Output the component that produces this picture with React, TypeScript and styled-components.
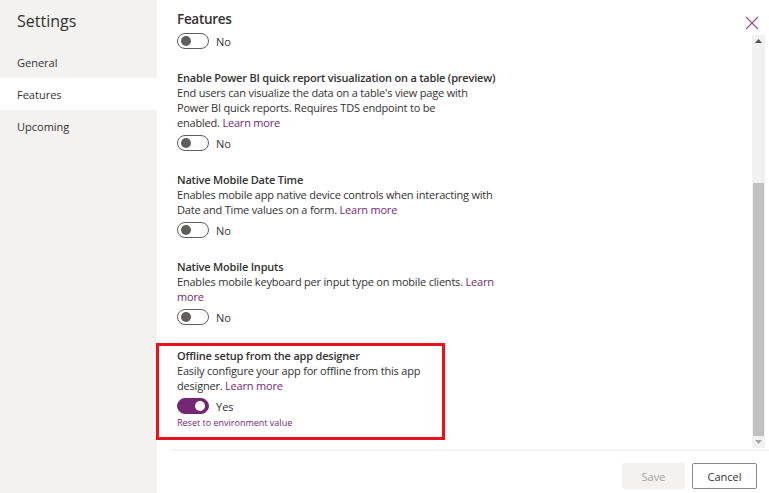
import React from "react";
import styled, { createGlobalStyle } from "styled-components";

const Global = createGlobalStyle`
  html, body { margin: 0; padding: 0; background: #ffffff; }
  body { font-family: "Open Sans", "Noto Sans", sans-serif; color: #323130; }
  * { box-sizing: border-box; }
`;

const Page = styled.div`
  width: 769px;
  height: 493px;
  display: flex;
  overflow: hidden;
`;

const Sidebar = styled.nav`
  width: 157px;
  flex: none;
  background: #f3f2f1;
  display: flex;
  flex-direction: column;
`;

const SideTitle = styled.div`
  font-size: 16px;
  line-height: 24px;
  padding: 9px 0 0 17px;
  height: 46px;
  color: #323130;
`;

const NavItem = styled.div<{ $active?: boolean }>`
  height: 32px;
  display: flex;
  align-items: center;
  padding-left: 17px;
  font-size: 11px;
  color: #323130;
  background: ${(p) => (p.$active ? "#ffffff" : "transparent")};
`;

const Main = styled.main`
  flex: 1;
  display: flex;
  flex-direction: column;
  min-width: 0;
`;

const Header = styled.div`
  height: 33px;
  display: flex;
  align-items: flex-start;
  justify-content: space-between;
  padding: 9px 10px 0 20px;
`;

const PageTitle = styled.h1`
  margin: 0;
  font-size: 13.5px;
  letter-spacing: -0.3px;
  line-height: 20px;
  font-weight: 600;
  color: #323130;
`;

const CloseButton = styled.button`
  border: none;
  background: transparent;
  padding: 0;
  margin-top: 7px;
  width: 14px;
  height: 14px;
  display: flex;
  cursor: pointer;
`;

const Body = styled.div`
  flex: 1;
  display: flex;
  min-height: 0;
`;

const Scroller = styled.div`
  flex: 1;
  margin-left: -1px;
  padding-left: 21px;
  overflow: hidden;
`;

const ScrollTrack = styled.div`
  width: 13px;
  margin: 2px 4px 1px 0;
  background: #f1f1f1;
  display: flex;
  flex-direction: column;
`;

const ArrowCell = styled.div`
  height: 12px;
  display: flex;
  align-items: center;
  justify-content: center;
  flex: none;
`;

const TrackSpace = styled.div<{ $grow: number }>`
  flex: ${(p) => p.$grow};
`;

const Thumb = styled.div<{ $grow: number }>`
  flex: ${(p) => p.$grow};
  margin: 0 1px;
  background: #c1c1c1;
`;

const Section = styled.section<{ $highlight?: boolean }>`
  display: flex;
  flex-direction: column;
  margin-top: ${(p) => (p.$highlight ? "18px" : "21px")};
  ${(p) =>
    p.$highlight
      ? `margin-left: -21px; width: 289px; border: 3px solid #e8111e; padding: 2px 0 7px 18px;`
      : ""}
`;

const Title = styled.div`
  font-size: 11px;
  letter-spacing: -0.2px;
  line-height: 15px;
  font-weight: 600;
  color: #323130;
  white-space: nowrap;
`;

const Desc = styled.div`
  font-size: 11px;
  letter-spacing: -0.2px;
  line-height: 15px;
  color: #323130;
  white-space: nowrap;
`;

const Link = styled.a`
  color: #742774;
  text-decoration: none;
`;

const ToggleRow = styled.div<{ $first?: boolean }>`
  display: flex;
  align-items: center;
  gap: 7px;
  height: 16px;
  margin-top: ${(p) => (p.$first ? "0" : "5px")};
`;

const Track = styled.span<{ $on?: boolean }>`
  width: 32px;
  height: 16px;
  border-radius: 8px;
  border: 1px solid ${(p) => (p.$on ? "#742774" : "#605e5c")};
  background: ${(p) => (p.$on ? "#742774" : "#ffffff")};
  display: flex;
  align-items: center;
  justify-content: ${(p) => (p.$on ? "flex-end" : "flex-start")};
  padding: 0 3px;
`;

const Knob = styled.span<{ $on?: boolean }>`
  width: 10px;
  height: 10px;
  border-radius: 50%;
  background: ${(p) => (p.$on ? "#ffffff" : "#605e5c")};
`;

const ToggleLabel = styled.span`
  font-size: 11px;
  color: #323130;
`;

const ResetLink = styled.a`
  font-size: 9px;
  line-height: 15px;
  color: #742774;
  margin-top: 1px;
  text-decoration: none;
`;

const Footer = styled.footer`
  height: 44px;
  flex: none;
  margin-left: 13px;
  border-top: 2px solid #f3f2f1;
  display: flex;
  justify-content: flex-end;
  align-items: flex-start;
  gap: 7px;
  padding: 12px 12px 0 0;
`;

const Button = styled.button<{ $primary?: boolean }>`
  height: 26px;
  font-family: inherit;
  font-size: 11px;
  border-radius: 2px;
  padding: 0;
  width: ${(p) => (p.$primary ? "63px" : "65px")};
  background: ${(p) => (p.$primary ? "#f3f2f1" : "#ffffff")};
  color: ${(p) => (p.$primary ? "#a19f9d" : "#323130")};
  border: 1px solid ${(p) => (p.$primary ? "#f3f2f1" : "#8a8886")};
`;

function Toggle({ on, first }: { on?: boolean; first?: boolean }) {
  return (
    <ToggleRow $first={first}>
      <Track $on={on}>
        <Knob $on={on} />
      </Track>
      <ToggleLabel>{on ? "Yes" : "No"}</ToggleLabel>
    </ToggleRow>
  );
}

export default function App() {
  return (
    <>
      <Global />
      <Page>
        <Sidebar>
          <SideTitle>Settings</SideTitle>
          <NavItem>General</NavItem>
          <NavItem $active>Features</NavItem>
          <NavItem>Upcoming</NavItem>
        </Sidebar>
        <Main>
          <Header>
            <PageTitle>Features</PageTitle>
            <CloseButton aria-label="Close">
              <svg width="14" height="14" viewBox="0 0 14 14">
                <path d="M1 1 L13 13 M13 1 L1 13" stroke="#8f4a93" strokeWidth="1.1" fill="none" />
              </svg>
            </CloseButton>
          </Header>
          <Body>
            <Scroller>
              <Toggle first />
              <Section>
                <Title>Enable Power BI quick report visualization on a table (preview)</Title>
                <Desc>
                  End users can visualize the data on a table's view page with
                  <br />
                  Power BI quick reports. Requires TDS endpoint to be
                  <br />
                  enabled. <Link>Learn more</Link>
                </Desc>
                <Toggle />
              </Section>
              <Section>
                <Title>Native Mobile Date Time</Title>
                <Desc>
                  Enables mobile app native device controls when interacting with
                  <br />
                  Date and Time values on a form. <Link>Learn more</Link>
                </Desc>
                <Toggle />
              </Section>
              <Section>
                <Title>Native Mobile Inputs</Title>
                <Desc>
                  Enables mobile keyboard per input type on mobile clients. <Link>Learn</Link>
                  <br />
                  <Link>more</Link>
                </Desc>
                <Toggle />
              </Section>
              <Section $highlight>
                <Title>Offline setup from the app designer</Title>
                <Desc>
                  Easily configure your app for offline from this app
                  <br />
                  designer. <Link>Learn more</Link>
                </Desc>
                <Toggle on />
                <ResetLink>Reset to environment value</ResetLink>
              </Section>
            </Scroller>
            <ScrollTrack>
              <ArrowCell>
                <svg width="7" height="4" viewBox="0 0 7 4">
                  <path d="M0 4 L3.5 0 L7 4 Z" fill="#505050" />
                </svg>
              </ArrowCell>
              <TrackSpace $grow={136} />
              <Thumb $grow={254} />
              <ArrowCell>
                <svg width="7" height="4" viewBox="0 0 7 4">
                  <path d="M0 0 L7 0 L3.5 4 Z" fill="#a3a3a3" />
                </svg>
              </ArrowCell>
            </ScrollTrack>
          </Body>
          <Footer>
            <Button $primary disabled>Save</Button>
            <Button>Cancel</Button>
          </Footer>
        </Main>
      </Page>
    </>
  );
}
